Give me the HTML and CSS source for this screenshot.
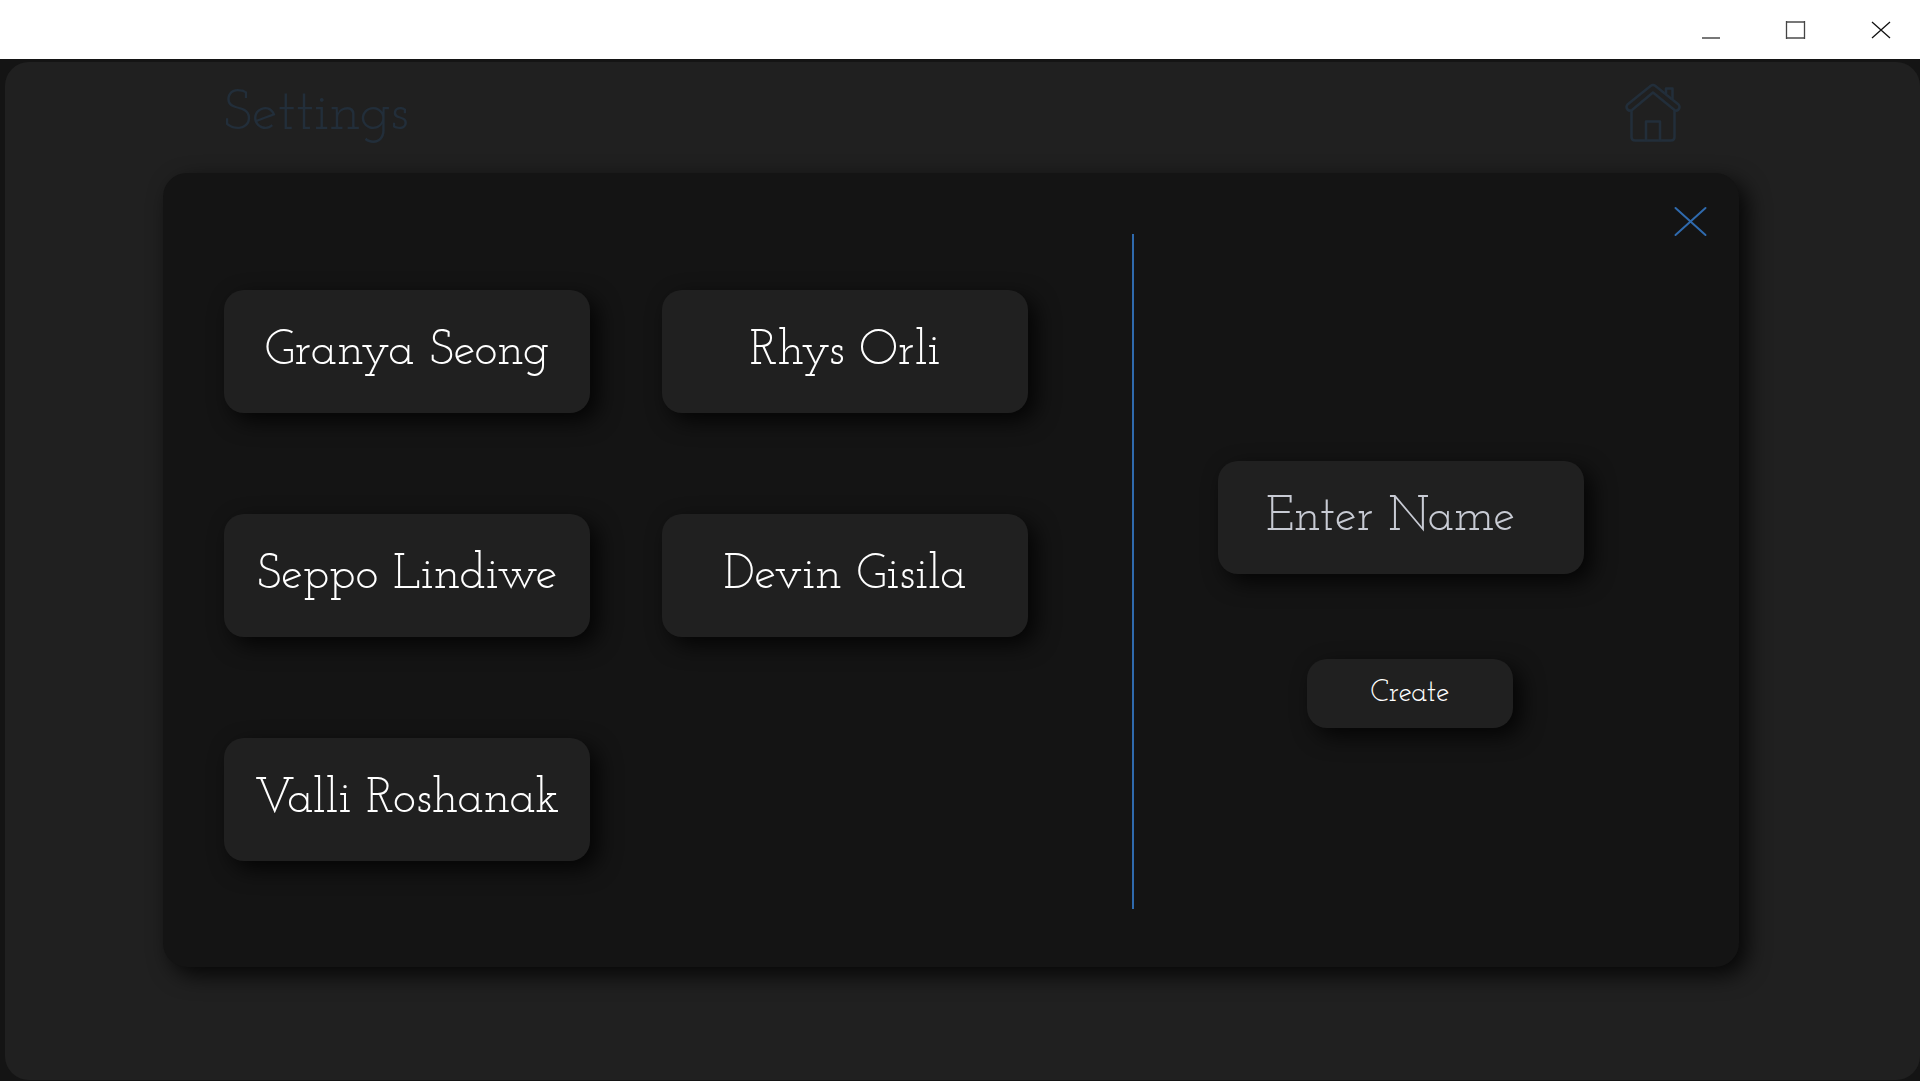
FILE: index.html
```html
<!DOCTYPE html>
<html lang="en">
<head>
  <meta charset="utf-8">
  <meta name="viewport" content="width=device-width, initial-scale=1">
  <title>Settings</title>
  <link rel="stylesheet" href="styles.css">
</head>
<body>
  <div class="titlebar">
    <button class="window-button" type="button" aria-label="Minimize">
      <svg width="22" height="22" viewBox="0 0 22 22"><path d="M2 19H20" stroke="#777" stroke-width="2"/></svg>
    </button>
    <button class="window-button" type="button" aria-label="Maximize">
      <svg width="22" height="22" viewBox="0 0 22 22"><path d="M1 3H20M1 19H20" stroke="#777" stroke-width="2"/><path d="M1.500 2V20M19.500 2V20" stroke="#444" stroke-width="1.300"/></svg>
    </button>
    <button class="window-button" type="button" aria-label="Close window">
      <svg width="22" height="22" viewBox="0 0 22 22"><path d="M2 3L20 19M20 3L2 19" stroke="#111" stroke-width="1.300"/></svg>
    </button>
  </div>

  <main class="panel">
    <header class="header">
      <h1 class="title">Settings</h1>
      <a class="home" href="#" aria-label="Home">
        <svg width="56" height="60" viewBox="0 0 56 60" fill="none" stroke="currentColor" stroke-width="2.500" stroke-linejoin="round" stroke-linecap="round">
          <path d="M6.500 28V54Q6.500 57.500 10 57.500H46Q49.500 57.500 49.500 54V28"/>
          <path d="M21 57V38.500H35V57"/>
          <path d="M25.500 3Q28 1 30.500 3L53.500 21.500Q55.500 24 53.500 26.500Q51.500 28.500 49.500 27L28 9.500L7 27Q4.500 28.500 2.500 26.500Q.500 24 2.500 21.500Z"/>
          <path d="M41 11V5.500H47.500V16"/>
        </svg>
      </a>
    </header>

    <section class="dialog" role="dialog" aria-label="Choose or create a user">
      <button class="close" type="button" aria-label="Close">
        <svg width="34" height="32" viewBox="0 0 34 32" fill="none" stroke="currentColor" stroke-width="2" stroke-linecap="round"><path d="M1.500 2L31.500 29M31.500 2L1.500 29"/></svg>
      </button>

      <div class="users">
        <button class="card user" type="button">Granya Seong</button>
        <button class="card user" type="button">Rhys Orli</button>
        <button class="card user" type="button">Seppo Lindiwe</button>
        <button class="card user" type="button">Devin Gisila</button>
        <button class="card user" type="button">Valli Roshanak</button>
      </div>

      <div class="divider"></div>

      <form class="create-form">
        <input class="card name-input" type="text" placeholder="Enter Name" aria-label="Enter Name">
        <div class="actions">
          <button class="card create" type="button">Create</button>
        </div>
      </form>
    </section>
  </main>
</body>
</html>
```
FILE: styles.css
```css
* {
  box-sizing: border-box;
}

body {
  margin: 0;
  min-height: 100vh;
  display: flex;
  flex-direction: column;
  background: #141414;
  color: #fff;
  font-family: "Josefin Slab", "Liberation Serif", "Times New Roman", serif;
  font-weight: 400;
}

button,
input {
  border: 0;
  padding: 0;
  font-family: inherit;
  font-weight: inherit;
  color: inherit;
}

svg {
  display: block;
}

.titlebar {
  display: flex;
  justify-content: flex-end;
  gap: 15px;
  height: 59px;
  padding-right: 4px;
  background: #fff;
}

.window-button {
  display: flex;
  align-items: center;
  justify-content: center;
  width: 70px;
  background: none;
}

.panel {
  flex: 1;
  display: flex;
  flex-direction: column;
  margin: 3px 0 1px 5px;
  padding-bottom: 113px;
  border-radius: 24px;
  background: #202020;
}

.header {
  display: flex;
  align-items: center;
  justify-content: space-between;
  height: 111px;
  padding: 0 239px 10px 218px;
  color: #222e3a;
}

.title {
  margin: 0;
  padding-top: 4px;
  font-size: 58px;
  font-weight: inherit;
  line-height: 64px;
}

.home {
  color: inherit;
}

.dialog {
  position: relative;
  flex: 1;
  display: grid;
  grid-template-columns: minmax(0, 908fr) 2px minmax(0, 450fr);
  margin: 0 181px 0 158px;
  padding: 61px 155px 58px 61px;
  border-radius: 24px;
  background: #141414;
  box-shadow: 8px 8px 22px rgba(0, 0, 0, 0.8);
}

.close {
  position: absolute;
  top: 33px;
  right: 31px;
  background: none;
  color: #2f6aad;
}

.card {
  border-radius: 20px;
  background: #202020;
  box-shadow: 8px 8px 22px rgba(0, 0, 0, 0.8);
}

.users {
  display: grid;
  grid-template-columns: 1fr 1fr;
  grid-auto-rows: 123px;
  align-content: start;
  gap: 101px 72px;
  margin-right: 104px;
  padding-top: 56px;
}

.user {
  font-size: 49px;
}

.divider {
  background: #2f6aad;
}

.create-form {
  margin-left: 84px;
  padding-top: 227px;
}

.name-input {
  display: block;
  width: 100%;
  height: 113px;
  padding: 0 20px 0 48px;
  font-size: 49px;
}

.name-input::placeholder {
  color: #c8cbd4;
  opacity: 1;
}

.actions {
  display: flex;
  justify-content: center;
  padding: 85px 0 0 18px;
}

.create {
  width: 206px;
  height: 69px;
  font-size: 30px;
}
```
